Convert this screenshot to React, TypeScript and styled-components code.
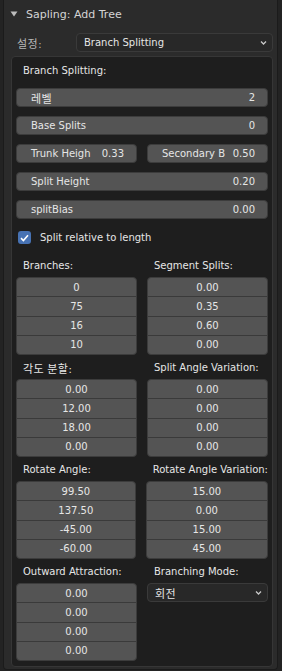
import React from 'react';
import styled, { createGlobalStyle } from 'styled-components';

const Global = createGlobalStyle`
  html, body { margin: 0; padding: 0; background: #232323; }
  body {
    font-family: "DejaVu Sans", "Noto Sans CJK KR", sans-serif;
    font-size: 10px;
    color: #e6e6e6;
  }
  * { box-sizing: border-box; }
`;

const Page = styled.div`
  width: 282px;
  height: 671px;
  padding: 0 4px 1px 3px;
  background: #232323;
  overflow: hidden;
`;

const Panel = styled.section`
  height: 100%;
  background: #2b2b2b;
  border: 1px solid #1b1b1b;
  border-top: none;
  border-radius: 0 0 4px 4px;
  display: flex;
  flex-direction: column;
`;

const Header = styled.div`
  height: 28px;
  display: flex;
  align-items: center;
  padding-left: 6px;
  gap: 8px;
  font-size: 11px;
  color: #d4d4d4;
`;

const PresetRow = styled.div`
  margin: 5px 4px 0 13px;
  height: 19px;
  display: flex;
  align-items: center;
`;

const PresetLabel = styled.span`
  width: 59px;
  color: #b8b8b8;
`;

const Ko = styled.span`
  font-family: "Noto Sans CJK KR", "DejaVu Sans", sans-serif;
  font-size: 11px;
  letter-spacing: 0.5px;
`;

const Dropdown = styled.div<{ $grow?: boolean }>`
  height: 19px;
  flex: ${(p) => (p.$grow ? '1' : '0 0 19px')};
  background: #282828;
  border: 1px solid #3a3a3a;
  border-radius: 4px;
  display: flex;
  align-items: center;
  justify-content: space-between;
  padding: 0 4px 0 7px;
  color: #e6e6e6;
  white-space: nowrap;
`;

const Box = styled.div`
  margin: 4px 4px 0 7px;
  background: #1e1e1e;
  border: 1px solid #363636;
  border-radius: 4px;
  padding: 4px 4px 5px 4px;
  display: flex;
  flex-direction: column;
`;

const Title = styled.div`
  height: 19px;
  line-height: 19px;
  padding-left: 7px;
  margin-bottom: 8px;
  color: #e6e6e6;
`;

const Field = styled.div`
  height: 19px;
  flex: 1;
  background: #545454;
  border: 1px solid #3c3c3c;
  border-radius: 4px;
  display: flex;
  align-items: center;
  justify-content: space-between;
  padding: 0 12px 0 14px;
  white-space: nowrap;
  color: #e6e6e6;
`;

const FieldRow = styled.div<{ $gap?: number }>`
  display: flex;
  gap: 10px;
  margin-bottom: ${(p) => p.$gap ?? 9}px;
`;

const CheckRow = styled.label`
  height: 19px;
  display: flex;
  align-items: center;
  padding-left: 2px;
  gap: 9px;
  margin-bottom: 6px;
  color: #e6e6e6;
`;

const CheckBox = styled.span`
  width: 13px;
  height: 13px;
  border-radius: 3px;
  background: #4772b3;
  display: flex;
  align-items: center;
  justify-content: center;
`;

const Groups = styled.div`
  display: grid;
  grid-template-columns: 1fr 1fr;
  column-gap: 10px;
  align-items: start;
`;

const Column = styled.div`
  display: flex;
  flex-direction: column;
`;

const ColLabel = styled.div`
  height: 24px;
  line-height: 22px;
  padding-top: 2px;
  padding-left: 7px;
  white-space: nowrap;
  color: #e6e6e6;
`;

const Block = styled.div`
  height: 78px;
  background: #545454;
  border: 1px solid #3c3c3c;
  border-radius: 4px;
  display: flex;
  flex-direction: column;
  overflow: hidden;
`;

const Cell = styled.div`
  flex: 1;
  display: flex;
  align-items: center;
  justify-content: center;
  color: #e6e6e6;
  & + & {
    border-top: 1px solid #3a3a3a;
  }
`;

const Chevron = () => (
  <svg width="9" height="6" viewBox="0 0 9 6">
    <polyline points="2,1.5 4.5,4 7,1.5" fill="none" stroke="#c8c8c8" strokeWidth="1.3" />
  </svg>
);

const Triangle = () => (
  <svg width="8" height="6" viewBox="0 0 8 6">
    <polygon points="0.5,0.5 7.5,0.5 4,5.5" fill="#bcbcbc" />
  </svg>
);

type Col = { label: React.ReactNode; values?: string[]; dropdown?: React.ReactNode };

const groups: [Col, Col][] = [
  [
    { label: 'Branches:', values: ['0', '75', '16', '10'] },
    { label: 'Segment Splits:', values: ['0.00', '0.35', '0.60', '0.00'] },
  ],
  [
    { label: <><Ko>각도 분할</Ko>:</>, values: ['0.00', '12.00', '18.00', '0.00'] },
    { label: 'Split Angle Variation:', values: ['0.00', '0.00', '0.00', '0.00'] },
  ],
  [
    { label: 'Rotate Angle:', values: ['99.50', '137.50', '-45.00', '-60.00'] },
    { label: 'Rotate Angle Variation:', values: ['15.00', '0.00', '15.00', '45.00'] },
  ],
  [
    { label: 'Outward Attraction:', values: ['0.00', '0.00', '0.00', '0.00'] },
    { label: 'Branching Mode:', dropdown: <Ko>회전</Ko> },
  ],
];

const ColumnView = ({ col }: { col: Col }) => (
  <Column>
    <ColLabel>{col.label}</ColLabel>
    {col.values ? (
      <Block>
        {col.values.map((v, i) => (
          <Cell key={i}>{v}</Cell>
        ))}
      </Block>
    ) : (
      <Dropdown>
        <span>{col.dropdown}</span>
        <Chevron />
      </Dropdown>
    )}
  </Column>
);

export default function App() {
  return (
    <Page>
      <Global />
      <Panel>
        <Header>
          <Triangle />
          <span>Sapling: Add Tree</span>
        </Header>
        <PresetRow>
          <PresetLabel>
            <Ko>설정</Ko>:
          </PresetLabel>
          <Dropdown $grow>
            <span>Branch Splitting</span>
            <Chevron />
          </Dropdown>
        </PresetRow>
        <Box>
          <Title>Branch Splitting:</Title>
          <FieldRow>
            <Field>
              <Ko>레벨</Ko>
              <span>2</span>
            </Field>
          </FieldRow>
          <FieldRow>
            <Field>
              <span>Base Splits</span>
              <span>0</span>
            </Field>
          </FieldRow>
          <FieldRow>
            <Field>
              <span>Trunk Heigh</span>
              <span>0.33</span>
            </Field>
            <Field>
              <span>Secondary B</span>
              <span>0.50</span>
            </Field>
          </FieldRow>
          <FieldRow>
            <Field>
              <span>Split Height</span>
              <span>0.20</span>
            </Field>
          </FieldRow>
          <FieldRow>
            <Field>
              <span>splitBias</span>
              <span>0.00</span>
            </Field>
          </FieldRow>
          <CheckRow>
            <CheckBox>
              <svg width="9" height="8" viewBox="0 0 9 8">
                <polyline points="1,4.2 3.4,6.5 8,1.3" fill="none" stroke="#ffffff" strokeWidth="1.6" />
              </svg>
            </CheckBox>
            <span>Split relative to length</span>
          </CheckRow>
          {groups.map(([l, r], i) => (
            <Groups key={i}>
              <ColumnView col={l} />
              <ColumnView col={r} />
            </Groups>
          ))}
        </Box>
      </Panel>
    </Page>
  );
}
